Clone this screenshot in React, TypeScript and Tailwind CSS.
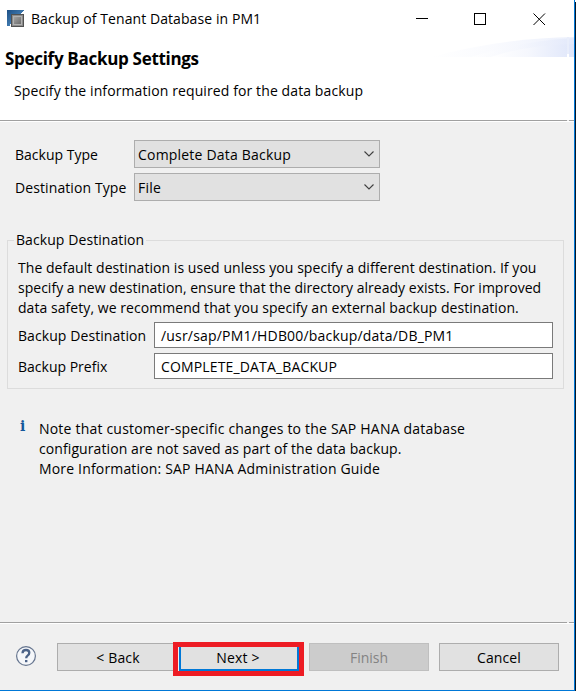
import type { ReactNode } from "react";

function AppIcon() {
  return (
    <svg width="18" height="18" viewBox="0 0 18 18" shapeRendering="crispEdges">
      <defs>
        <linearGradient id="blue" x1="0" y1="0" x2="1" y2="1">
          <stop offset="0" stopColor="#1d4f85" />
          <stop offset="1" stopColor="#5b9bd0" />
        </linearGradient>
        <linearGradient id="steel" x1="0" y1="0" x2="1" y2="1">
          <stop offset="0" stopColor="#a2a2a2" />
          <stop offset="1" stopColor="#6c6c6c" />
        </linearGradient>
      </defs>
      <path d="M0 0H17L14 4H7L3 16H0Z" fill="url(#blue)" />
      <rect x="4" y="4" width="13" height="13" fill="#515151" />
      <rect x="5" y="5" width="11" height="11" fill="#8b8b8b" />
      <rect x="6" y="6" width="9" height="9" fill="#b1b1b1" />
      <rect x="7" y="7" width="7" height="7" fill="url(#steel)" />
    </svg>
  );
}

function HeaderWave() {
  return (
    <svg width="143" height="20" viewBox="0 0 143 20" className="absolute right-0 top-0">
      <defs>
        <linearGradient id="wave" x1="0" y1="0" x2="1" y2="0">
          <stop offset="0" stopColor="#ffffff" />
          <stop offset="0.45" stopColor="#f5f7fd" />
          <stop offset="1" stopColor="#dfe6fa" />
        </linearGradient>
      </defs>
      <path d="M0 20Q70 1 143 0V20Z" fill="url(#wave)" opacity="0.6" />
      <path d="M40 20Q90 4 143 1V20Z" fill="url(#wave)" opacity="0.7" />
      <path d="M60 20Q95 8 143 7V20Z" fill="url(#wave)" />
      <path d="M136 0H138V18H136Z" fill="#e9eefb" />
      <path d="M136 17H138V20H136Z" fill="#ffffff" />
    </svg>
  );
}

function Rule() {
  return (
    <div className="h-[2px] bg-white">
      <div className="flex h-px">
        <div className="w-[567px] bg-[#a0a0a0]" />
        <div className="w-[2px] bg-[#f0f0f0]" />
        <div className="flex-1 bg-[#a0a0a0]" />
      </div>
    </div>
  );
}

function Select({ children }: { children: ReactNode }) {
  return (
    <div className="flex h-7 w-[246px] items-center justify-between border border-[#adadad] bg-[#e1e1e1] pl-[3px] pr-[5px]">
      {children}
      <svg width="10" height="6" viewBox="0 0 10 6" fill="none" stroke="#404040" strokeWidth="1.1">
        <path d="M0.5 0.5L5 5L9.5 0.5" />
      </svg>
    </div>
  );
}

function Button({ children, className }: { children: ReactNode; className: string }) {
  return (
    <button className={`flex h-7 shrink-0 items-center justify-center border pt-px ${className}`}>
      {children}
    </button>
  );
}

export default function App() {
  return (
    <div className="flex h-[691px] w-[576px] whitespace-nowrap font-['Open_Sans','Noto_Sans',sans-serif] text-[14px] leading-5 text-black">
      <div className="flex w-[575px] flex-col border-b border-r border-[#0078d7] bg-[#f0f0f0]">
        <div className="h-[120px] bg-white">
          <div className="flex h-[37px] items-center pl-[7px]">
            <AppIcon />
            <span className="ml-[6px] w-[385px] tracking-[0.08px]">Backup of Tenant Database in PM1</span>
            <svg width="130" height="14" viewBox="0 0 130 14" fill="none" stroke="#000">
              <path d="M0 6.5H12" />
              <rect x="58.5" y="1.5" width="11" height="11" />
              <path d="M117.5 1.5L129 13M129 1.5L117.5 13" />
            </svg>
          </div>
          <div className="relative h-[83px]">
            <HeaderWave />
            <h1 className="pl-[5px] pt-[12px] text-[17px] font-bold leading-5 tracking-[-0.3px]">Specify Backup Settings</h1>
            <p className="pl-[14px] pt-[12px] tracking-[0.105px]">Specify the information required for the data backup</p>
          </div>
        </div>
        <Rule />

        <div className="grid grid-cols-[119px_246px] items-center gap-y-[5px] pl-[15px] pt-[18px]">
          <span className="pt-px">Backup Type</span>
          <Select><span className="pt-px tracking-[0.2px]">Complete Data Backup</span></Select>
          <span className="pt-px tracking-[0.1px]">Destination Type</span>
          <Select><span className="pt-px tracking-[0.2px]">File</span></Select>
        </div>

        <fieldset className="ml-[7px] mt-[29px] h-[159px] w-[557px] border border-[#dcdcdc] pl-[10px]">
          <legend className="-ml-[4px] px-[2px] tracking-[0.08px]">Backup Destination</legend>
          <p className="mt-[8px] tracking-[0.05px]">The default destination is used unless you specify a different destination. If you</p>
          <p className="tracking-[0.015px]">specify a new destination, ensure that the directory already exists. For improved</p>
          <p className="tracking-[0.055px]">data safety, we recommend that you specify an external backup destination.</p>
          <div className="mt-[4px] grid grid-cols-[136px_399px] items-center gap-y-[5px]">
            <span className="pt-px tracking-[0.08px]">Backup Destination</span>
            <div className="flex h-[26px] items-center border border-[#7a7a7a] bg-white pl-[6px] pt-px tracking-[0.19px]">/usr/sap/PM1/HDB00/backup/data/DB_PM1</div>
            <span className="pt-px">Backup Prefix</span>
            <div className="flex h-[26px] items-center border border-[#7a7a7a] bg-white pl-[6px] pt-px tracking-[0.15px]">COMPLETE_DATA_BACKUP</div>
          </div>
        </fieldset>

        <div className="mt-[30px] flex pl-[20px]">
          <span className="-mt-[3px] w-[19px] font-['DejaVu_Serif',serif] text-[14px] font-bold text-[#13579b]">i</span>
          <div>
            <p className="tracking-[0.2px]">Note that customer-specific changes to the SAP HANA database</p>
            <p className="tracking-[0.09px]">configuration are not saved as part of the data backup.</p>
            <p className="tracking-[0.17px]">More Information: SAP HANA Administration Guide</p>
          </div>
        </div>

        <div className="mt-auto">
          <Rule />
          <div className="flex h-[66px] items-start pl-[15px] pt-[19px]">
            <svg width="22" height="22" viewBox="0 0 22 22" className="mt-[2px] shrink-0">
              <circle cx="11" cy="11" r="9.4" fill="#f5f7fa" stroke="#66758f" strokeWidth="1.2" />
              <path d="M7.5 8.2Q7.6 5 11 5Q14.3 5 14.3 7.8Q14.3 9.4 12.6 10.6Q11.2 11.6 11.2 13.3" fill="none" stroke="#4c6388" strokeWidth="2.3" />
              <rect x="10" y="15" width="2.4" height="2.2" fill="#4c6388" />
            </svg>
            <Button className="ml-[20px] w-[116px] border-r-0 border-[#adadad] bg-[#e1e1e1] pl-[5px] tracking-[0.15px]">&lt; Back</Button>
            <div className="-mt-px h-[34px] w-[131px] shrink-0 border-[5px] border-[#ed1c24] bg-[#f0f0f0] pl-px">
              <button className="h-6 w-full border-2 border-t-0 border-[#0078d7] bg-[#e1e1e1] pr-[2px] tracking-[0.2px]">Next &gt;</button>
            </div>
            <Button className="ml-[5px] w-[120px] border-[#bfbfbf] bg-[#cccccc] text-[#838383]">Finish</Button>
            <Button className="ml-[10px] w-[120px] border-[#adadad] bg-[#e1e1e1] tracking-[0.1px]">Cancel</Button>
          </div>
        </div>
      </div>
      <div className="mt-[2px] w-px bg-[#07182b]" />
    </div>
  );
}
